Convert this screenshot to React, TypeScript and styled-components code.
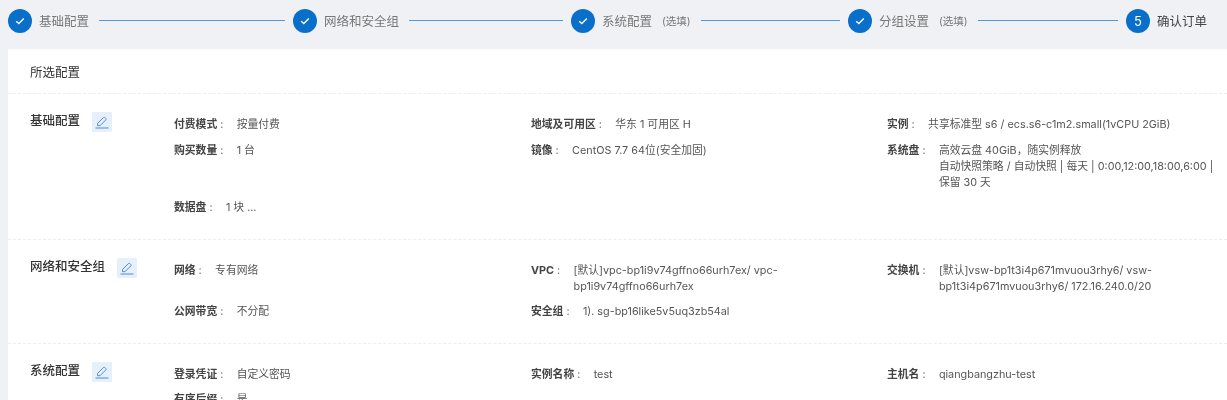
import React from 'react'
import styled, { createGlobalStyle } from 'styled-components'

type StepData = {
  label: string
  hint?: string
  span?: number
}

type ItemData = {
  label: string
  lines: string[]
}

type SectionData = {
  title: string
  items: ItemData[]
}

const steps: StepData[] = [
  { label: '基础配置', span: 285 },
  { label: '网络和安全组', span: 278 },
  { label: '系统配置', hint: '(选填)', span: 277 },
  { label: '分组设置', hint: '(选填)', span: 278 },
  { label: '确认订单' },
]

const sections: SectionData[] = [
  {
    title: '基础配置',
    items: [
      { label: '付费模式', lines: ['按量付费'] },
      { label: '地域及可用区', lines: ['华东 1 可用区 H'] },
      { label: '实例', lines: ['共享标准型 s6 / ecs.s6-c1m2.small(1vCPU 2GiB)'] },
      { label: '购买数量', lines: ['1 台'] },
      { label: '镜像', lines: ['CentOS 7.7 64位(安全加固)'] },
      {
        label: '系统盘',
        lines: ['高效云盘 40GiB，随实例释放', '自动快照策略 / 自动快照 | 每天 | 0:00,12:00,18:00,6:00 |', '保留 30 天'],
      },
      { label: '数据盘', lines: ['1 块 ...'] },
    ],
  },
  {
    title: '网络和安全组',
    items: [
      { label: '网络', lines: ['专有网络'] },
      { label: 'VPC', lines: ['[默认]vpc-bp1i9v74gffno66urh7ex/ vpc-', 'bp1i9v74gffno66urh7ex'] },
      { label: '交换机', lines: ['[默认]vsw-bp1t3i4p671mvuou3rhy6/ vsw-', 'bp1t3i4p671mvuou3rhy6/ 172.16.240.0/20'] },
      { label: '公网带宽', lines: ['不分配'] },
      { label: '安全组', lines: ['1). sg-bp16like5v5uq3zb54al'] },
    ],
  },
  {
    title: '系统配置',
    items: [
      { label: '登录凭证', lines: ['自定义密码'] },
      { label: '实例名称', lines: ['test'] },
      { label: '主机名', lines: ['qiangbangzhu-test'] },
      { label: '有序后缀', lines: ['是'] },
    ],
  },
]

const PencilIcon = () => (
  <svg width="14" height="14" viewBox="0 0 14 14" fill="none" stroke="#4f8bd6" strokeWidth="1">
    <path d="M2.6 8.4 8.4 2.5a1 1 0 0 1 1.4 0l1 1a1 1 0 0 1 0 1.4L5 10.7H2.6z" strokeLinejoin="round" />
    <path d="M0.5 13h13" />
  </svg>
)

const CheckIcon = () => (
  <svg width="10" height="8" viewBox="0 0 10 8" fill="none" stroke="#fff" strokeWidth="1.4">
    <path d="M1.2 4.2 3.8 6.6 8.8 1.4" />
  </svg>
)

const App: React.FC = () => (
  <>
    <GlobalStyle />
    <Page>
      <StepBar>
        {steps.map((step, index) => (
          <Step key={step.label} $span={step.span}>
            <StepCircle>{step.span ? <CheckIcon /> : index + 1}</StepCircle>
            <StepLabel $current={!step.span}>{step.label}</StepLabel>
            {step.hint && <StepHint>{step.hint}</StepHint>}
            {step.span && <StepLine />}
          </Step>
        ))}
      </StepBar>
      <Card>
        <CardTitle>所选配置</CardTitle>
        {sections.map((section) => (
          <Section key={section.title}>
            <SectionHead>
              <SectionTitle>{section.title}</SectionTitle>
              <EditButton>
                <PencilIcon />
              </EditButton>
            </SectionHead>
            <ItemGrid>
              {section.items.map((item) => (
                <Item key={item.label}>
                  <ItemLabel>{item.label}</ItemLabel>
                  <ItemColon>:</ItemColon>
                  <ItemValue>
                    {item.lines.map((line) => (
                      <div key={line}>{line}</div>
                    ))}
                  </ItemValue>
                </Item>
              ))}
            </ItemGrid>
          </Section>
        ))}
      </Card>
    </Page>
  </>
)

const GlobalStyle = createGlobalStyle`
  html, body {
    margin: 0;
    padding: 0;
    height: 400px;
    overflow: hidden;
    background: #eff1f5;
  }
  body {
    font-family: Inter, "Noto Sans CJK SC", sans-serif;
    font-size: 10.8px;
    color: #555;
  }
`

const Page = styled.div`
  display: flex;
  flex-direction: column;
  width: 1227px;
  height: 400px;
  overflow: hidden;
  filter: blur(0.35px);
`

const StepBar = styled.div`
  display: flex;
  align-items: center;
  flex: 0 0 49px;
  height: 49px;
  padding: 0 0 8px 8px;
  box-sizing: border-box;
`

const Step = styled.div<{ $span?: number }>`
  display: flex;
  align-items: center;
  flex: 0 0 ${(p) => (p.$span ? `${p.$span}px` : 'auto')};
  height: 24px;
`

const StepCircle = styled.div`
  display: flex;
  align-items: center;
  justify-content: center;
  flex: 0 0 24px;
  height: 24px;
  border-radius: 50%;
  background: #0a6fc9;
  color: #fff;
  font-size: 13px;
`

const StepLabel = styled.span<{ $current?: boolean }>`
  margin-left: 7px;
  font-size: 12.5px;
  white-space: nowrap;
  color: ${(p) => (p.$current ? '#444' : '#777')};
`

const StepHint = styled.span`
  margin-left: 10px;
  font-size: 10.5px;
  white-space: nowrap;
  color: #777;
`

const StepLine = styled.div`
  flex: 1;
  height: 1px;
  margin: 0 8px 0 10px;
  background: #4b9ae4;
`

const Card = styled.div`
  flex: 1;
  margin-left: 8px;
  background: #fff;
`

const CardTitle = styled.div`
  height: 44px;
  padding-left: 22px;
  font-size: 12.5px;
  line-height: 47px;
  color: #333;
  box-sizing: border-box;
`

const Section = styled.section`
  display: grid;
  grid-template-columns: 144px 1fr;
  padding: 23px 0 22.5px 22px;
  border-top: 1px dashed #eeeeee;
`

const SectionHead = styled.div`
  display: flex;
  align-items: flex-start;
  gap: 12px;
  margin-top: -5px;
`

const SectionTitle = styled.div`
  font-size: 12.5px;
  font-weight: 500;
  line-height: 18px;
  color: #333;
`

const EditButton = styled.button`
  display: flex;
  align-items: center;
  justify-content: center;
  width: 20px;
  height: 20px;
  padding: 0;
  border: 0;
  border-radius: 1px;
  background: #e6f0fa;
`

const ItemGrid = styled.div`
  display: grid;
  grid-template-columns: 357px 356px 1fr;
  row-gap: 9.5px;
  align-items: start;
`

const Item = styled.div`
  display: flex;
  align-items: flex-start;
  line-height: 16px;
`

const ItemLabel = styled.span`
  flex: none;
  font-weight: 700;
  color: #444;
`

const ItemColon = styled.span`
  flex: 0 0 19.5px;
  padding-left: 3px;
  box-sizing: border-box;
  color: #666;
`

const ItemValue = styled.div`
  white-space: nowrap;
  color: #555;
`

export default App
